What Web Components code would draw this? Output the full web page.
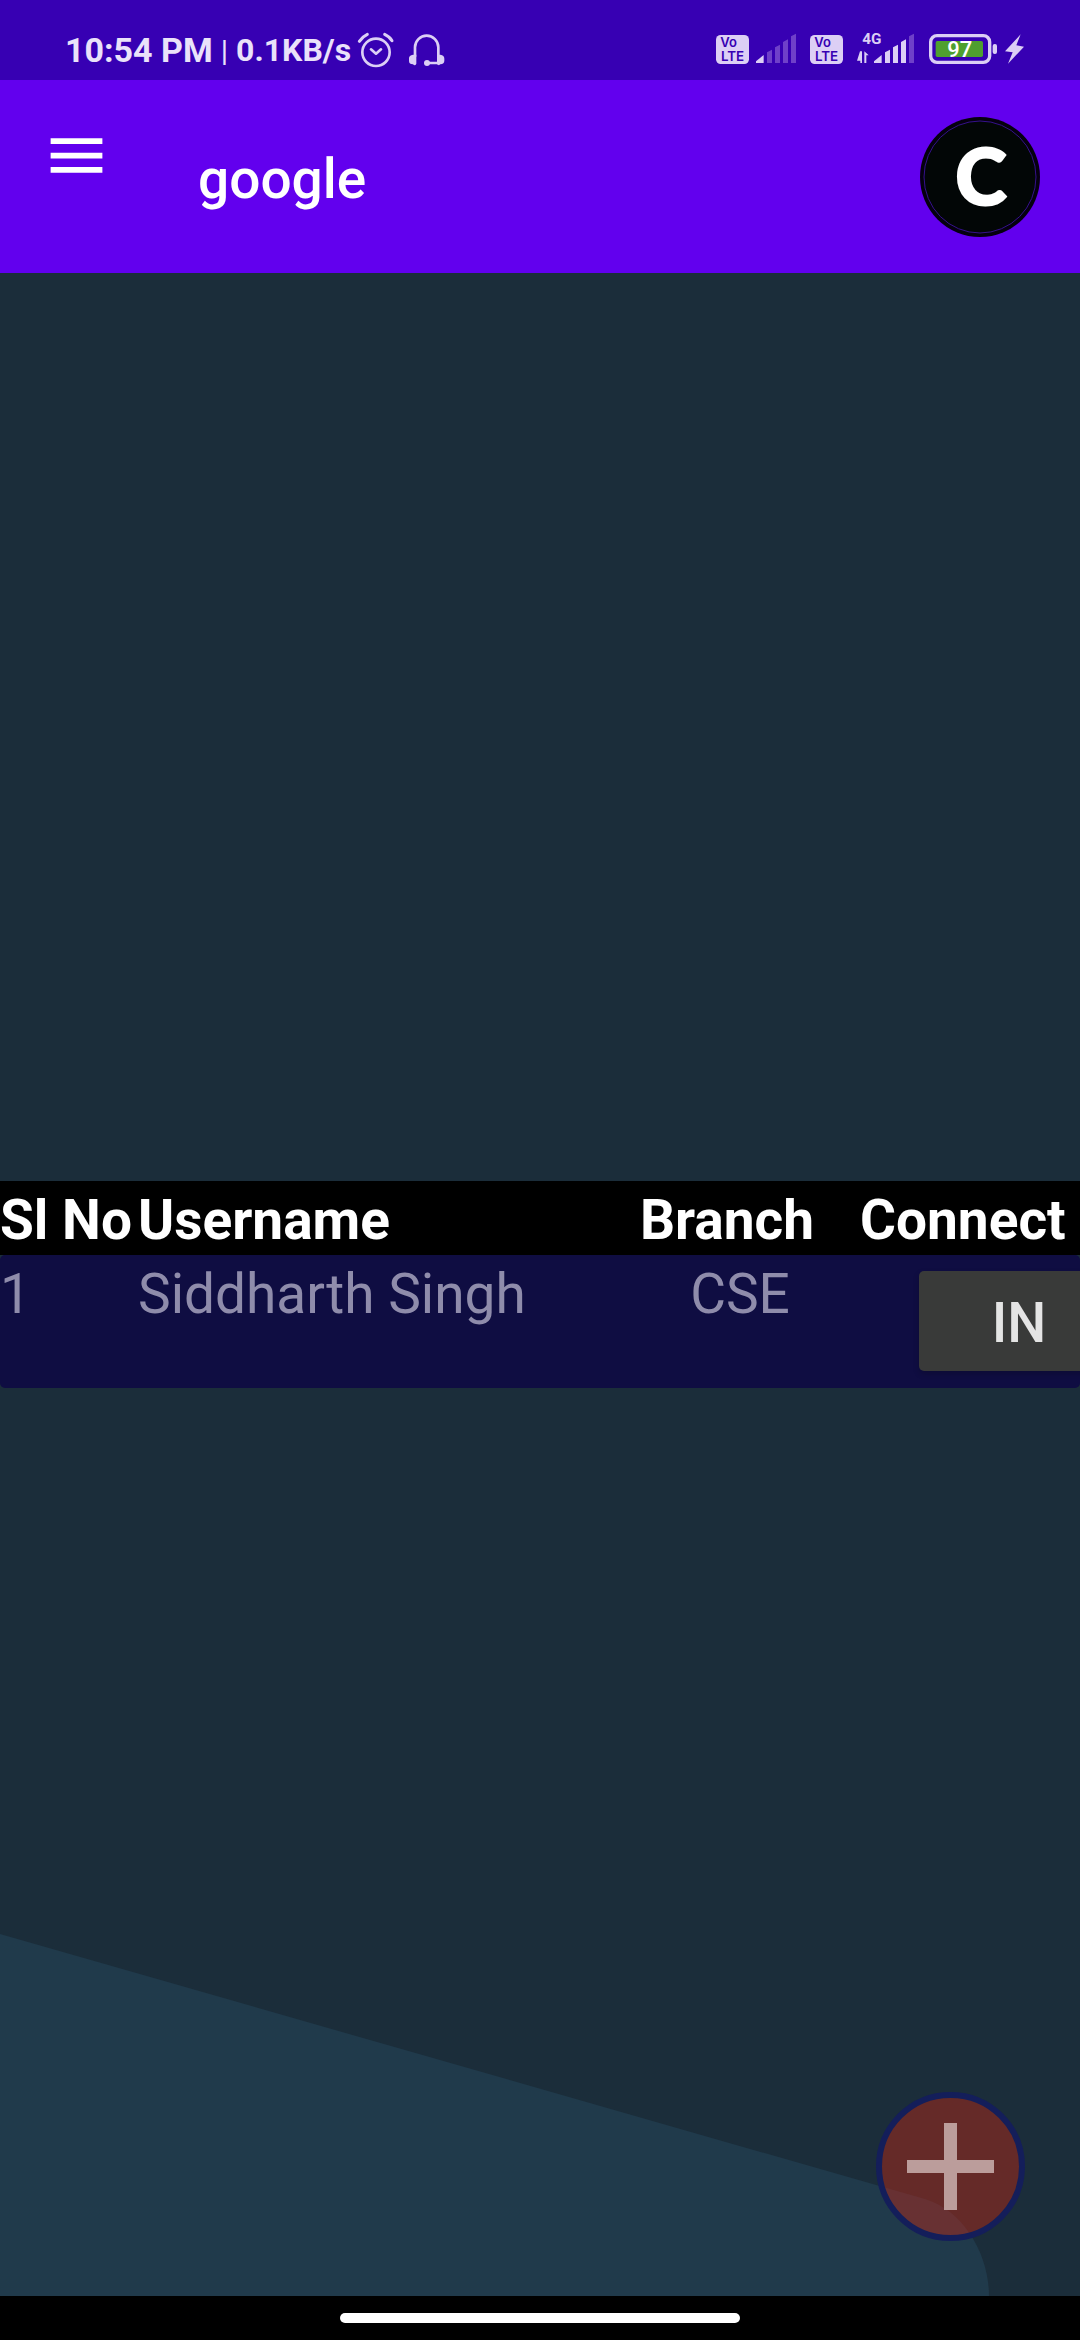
<!DOCTYPE html>
<html lang="en">
<head>
<meta charset="utf-8">
<meta name="viewport" content="width=device-width, initial-scale=1">
<title>google</title>
<style>
  html, body { margin: 0; }
  body { font-family: Roboto, "Liberation Sans", sans-serif; background: #1b2d3a; }
</style>
</head>
<body>
<app-screen>
  <status-bar slot="top"></status-bar>
  <app-bar slot="top">google</app-bar>
  <user-table></user-table>
  <add-button></add-button>
  <gesture-bar slot="bottom"></gesture-bar>
</app-screen>

<script>
function define(name, html) {
  const template = document.createElement('template');
  template.innerHTML = html;
  customElements.define(name, class extends HTMLElement {
    constructor() {
      super();
      this.attachShadow({ mode: 'open' }).append(template.content.cloneNode(true));
    }
  });
}

define('app-screen', `
  <style>
    :host { display: flex; flex-direction: column; min-height: 100vh; }
    main { flex: 1; display: grid; grid-template: 1fr / 100%; background: #1b2d3a; }
    .hill, ::slotted(*) { grid-area: 1 / 1; }
    .hill { width: 100%; align-self: end; display: block; }
  </style>
  <slot name="top"></slot>
  <main>
    <svg class="hill" viewBox="0 0 1080 363" aria-hidden="true">
      <path d="M0 1 L925 266 C965 278 989 323 989 363 L0 363Z" fill="#203a4b"/>
    </svg>
    <slot></slot>
  </main>
  <slot name="bottom"></slot>`);

define('volte-badge', `
  <style>:host { display: block; width: 33px; } svg { display: block; overflow: visible; }</style>
  <svg width="33" height="36" viewBox="45 66 99 108" font-family="Inter, sans-serif" font-weight="600" fill="#3700b3">
    <rect x="45" y="75" width="99" height="87" rx="14" fill="#dccff5"/>
    <text x="58" y="111" font-size="39">Vo</text>
    <text x="60" y="152" font-size="40">LTE</text>
  </svg>`);

define('status-bar', `
  <style>
    :host { display: flex; align-items: center; box-sizing: border-box; height: 80px;
            padding: 20px 56px 0 65px; background: #3700b3; color: #eae2fa; }
    svg { display: block; overflow: visible; fill: #dccff5; }
    .time, .rate { font-weight: 700; white-space: nowrap; }
    .time { font-size: 34px; }
    .rate { font-size: 32px; }
    .bar { font-size: 30px; margin: 0 8px; }
    .icons, .pair { display: flex; align-items: center; }
    .icons { gap: 14px; margin-left: 6px; }
    .right { margin-left: auto; }
    .tight { gap: 7px; }
    .wide { gap: 14px; }
    .dim { fill: #6f40c9; }
  </style>
  <span class="time">10:54 PM</span><span class="bar">|</span><span class="rate">0.1KB/s</span>
  <div class="icons">
    <svg width="37" height="36" viewBox="954 66 111 108">
      <g fill="none" stroke="#dccff5" stroke-width="8" stroke-linecap="round" stroke-linejoin="round">
        <circle cx="1011" cy="127" r="41"/>
        <path d="M996 118 L1011 131 L1026 118"/>
        <path d="M961 94 Q970 80 985 73 M1037 73 Q1052 80 1059 92" stroke-width="9"/>
      </g>
    </svg>
    <svg width="37" height="36" viewBox="1107 66 111 108">
      <path d="M1128 140 V112 A35 35 0 0 1 1198 112 V140 M1163 159 H1198" fill="none" stroke="#dccff5" stroke-width="8"/>
      <path d="M1122 134 H1132 V161 Q1128 170 1122 163 Q1110 163 1110 153 V144 Q1110 136 1122 134Z"/>
      <path d="M1194 134 H1204 Q1216 136 1216 146 V152 Q1216 162 1204 163 Q1200 168 1194 163Z"/>
      <circle cx="1164" cy="159" r="9"/>
    </svg>
  </div>
  <div class="icons right">
    <div class="pair tight">
      <volte-badge></volte-badge>
      <svg width="40" height="36" viewBox="165 66 120 108">
        <path d="M165 159 V154 L188 135 V159Z"/>
        <path class="dim" d="M198 159V127L213 119V159Z M222 159V112L237 104V159Z M246 159V96L261 88V159Z M270 159V79L285 71V159Z"/>
      </svg>
    </div>
    <div class="pair wide">
      <volte-badge></volte-badge>
      <svg width="57" height="36" viewBox="468 66 171 108">
        <text x="484" y="101" font-size="46" font-weight="700" font-family="Roboto, sans-serif">4G</text>
        <path d="M477 124H483V159H478V152H468Z M490 159V124L503 136H496V159Z"/>
        <path d="M519 159 V154 L542 135 V159Z M552 159V127L567 119V159Z M576 159V112L591 104V159Z M600 159V96L615 88V159Z"/>
        <path class="dim" d="M624 159V79L639 71V159Z"/>
      </svg>
    </div>
    <div class="pair tight">
      <svg width="70" height="36" viewBox="684 66 210 108">
        <rect x="692" y="77" width="177" height="80" rx="19" fill="none" stroke="#dccff5" stroke-width="10"/>
        <rect x="707" y="93" width="142" height="48" rx="5" fill="#4f9f2f"/>
        <rect x="878" y="102" width="13" height="30" rx="6"/>
        <text x="779" y="142" text-anchor="middle" font-size="66" font-weight="500" font-family="Roboto, sans-serif" fill="#fff">97</text>
      </svg>
      <svg width="19" height="36" viewBox="915 66 57 108">
        <path d="M962 73 L915 124 L938 127 L924 161 L972 110 L949 106Z"/>
      </svg>
    </div>
  </div>`);

define('app-bar', `
  <style>
    :host { display: flex; align-items: center; box-sizing: border-box; height: 193px;
            padding: 0 40px 0 42px; background: #6200ee; color: #fff; }
    button { border: 0; padding: 0; background: none; }
    .menu { margin-bottom: 42px; }
    svg { display: block; }
    h1 { flex: 1; margin: 4px 0 0 87px; font-size: 55px; line-height: 64px; font-weight: 500; }
    .avatar text { font: 900 78px Lato, sans-serif; fill: #fff; stroke: #fff; stroke-width: 2; }
  </style>
  <button class="menu" aria-label="Menu">
    <svg width="69" height="69" viewBox="0 0 24 24" fill="#fff"><path d="M3 18h18v-2H3v2zm0-5h18v-2H3v2zm0-7v2h18V6H3z"/></svg>
  </button>
  <h1><slot></slot></h1>
  <button class="avatar" aria-label="Account">
    <svg width="120" height="120" viewBox="0 0 120 120">
      <circle cx="60" cy="60" r="60" fill="#05000f"/>
      <circle cx="60" cy="60" r="56" fill="#020606" stroke="#35108c" stroke-width="1"/>
      <text x="61" y="88" text-anchor="middle">C</text>
    </svg>
  </button>`);

define('user-table', `
  <style>
    :host { display: block; align-self: center; overflow: hidden; font-size: 55px; line-height: 64px; }
    table { width: 100%; table-layout: fixed; border-spacing: 0; }
    th, td { padding: 0; text-align: left; vertical-align: top; white-space: nowrap; }
    th { height: 67px; padding-top: 7px; background: #000; color: #fff; font-weight: 700; }
    td { height: 126px; padding-top: 7px; background: #0f0d42; color: #8f8cab; font-weight: 400; }
    td:first-child { border-radius: 5px 0 0 5px; }
    td:last-child { border-radius: 0 5px 5px 0; padding-top: 16px; height: 117px; }
    .no { width: 138px; }
    .branch { width: 200px; }
    .connect { width: 240px; }
    th.connect { box-sizing: border-box; padding-left: 20px; }
    .mid { text-align: center; }
    button { display: block; width: 200px; height: 100px; margin-left: 79px; padding: 4px 0 0; border: 0; border-radius: 5px;
             background: #393a39; color: #e4e4e4; font: 500 55px Roboto, sans-serif;
             box-shadow: 0 3px 6px rgba(0,0,0,.2); }
  </style>
  <table>
    <thead><tr><th class="no">Sl No</th><th>Username</th><th class="branch">Branch</th><th class="connect">Connect</th></tr></thead>
    <tbody><tr><td>1</td><td>Siddharth Singh</td><td class="mid">CSE</td><td><button>IN</button></td></tr></tbody>
  </table>`);

define('add-button', `
  <style>
    :host { display: block; align-self: end; justify-self: end; margin: 0 55px 55px 0; }
    button { display: block; border: 0; padding: 0; background: none; border-radius: 50%; }
    svg { display: block; }
  </style>
  <button aria-label="Add">
    <svg width="149" height="149" viewBox="0 0 149 149">
      <circle cx="74.5" cy="74.5" r="70" fill="rgb(212,38,16)" fill-opacity=".4"/>
      <circle cx="74.5" cy="74.5" r="71.5" fill="none" stroke="#141e5a" stroke-width="6"/>
      <path d="M31 68H68V31H81V68H118V81H81V118H68V81H31Z" fill="#bb9d9b"/>
    </svg>
  </button>`);

define('gesture-bar', `
  <style>
    :host { display: flex; justify-content: center; align-items: center; height: 44px; background: #000; }
    i { width: 400px; height: 10px; border-radius: 5px; background: #fff; }
  </style>
  <i></i>`);
</script>
</body>
</html>
